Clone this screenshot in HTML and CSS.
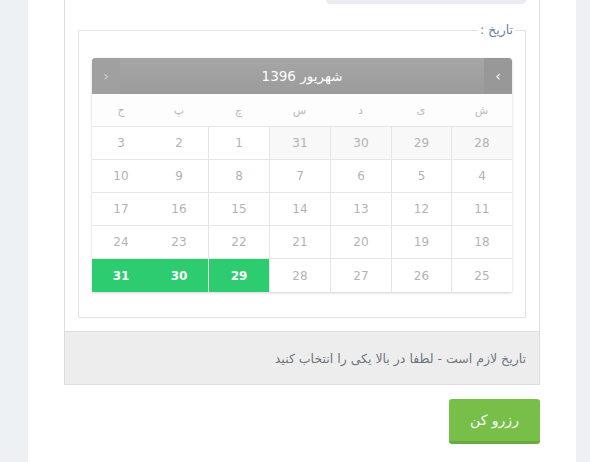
FILE: index.html
```html
<!DOCTYPE html>
<html lang="fa" dir="rtl">

<head>
    <meta charset="UTF-8">
    <meta name="viewport" content="width=device-width, initial-scale=1.0">
    <title>رزرو</title>
    <link rel="stylesheet" href="styles.css">
</head>

<body>
    <div class="page">
        <div class="panel">
            <div class="panel-body">
                <div class="input-stub"></div>
                <fieldset class="date-field">
                    <legend>تاریخ :</legend>
                    <div class="calendar">
                        <div class="cal-head">
                            <span class="cal-btn next">&rsaquo;</span>
                            <span class="cal-title">شهریور 1396</span>
                            <span class="cal-btn prev">&lsaquo;</span>
                        </div>
                        <div class="cal-grid">
                            <div class="wd">ش</div>
                            <div class="wd">ی</div>
                            <div class="wd">د</div>
                            <div class="wd">س</div>
                            <div class="wd">چ</div>
                            <div class="wd">پ</div>
                            <div class="wd">ج</div>

                            <div class="day other">28</div>
                            <div class="day other">29</div>
                            <div class="day other">30</div>
                            <div class="day other">31</div>
                            <div class="day">1</div>
                            <div class="day">2</div>
                            <div class="day">3</div>

                            <div class="day">4</div>
                            <div class="day">5</div>
                            <div class="day">6</div>
                            <div class="day">7</div>
                            <div class="day">8</div>
                            <div class="day">9</div>
                            <div class="day">10</div>

                            <div class="day">11</div>
                            <div class="day">12</div>
                            <div class="day">13</div>
                            <div class="day">14</div>
                            <div class="day">15</div>
                            <div class="day">16</div>
                            <div class="day">17</div>

                            <div class="day">18</div>
                            <div class="day">19</div>
                            <div class="day">20</div>
                            <div class="day">21</div>
                            <div class="day">22</div>
                            <div class="day">23</div>
                            <div class="day">24</div>

                            <div class="day last">25</div>
                            <div class="day last">26</div>
                            <div class="day last">27</div>
                            <div class="day last">28</div>
                            <div class="day last open">29</div>
                            <div class="day last open">30</div>
                            <div class="day last open">31</div>
                        </div>
                    </div>
                </fieldset>
            </div>
            <div class="panel-footer">تاریخ لازم است - لطفا در بالا یکی را انتخاب کنید</div>
        </div>
        <div class="actions">
            <button class="btn-book">رزرو کن</button>
        </div>
    </div>
</body>

</html>
```

FILE: styles.css
```css
* {
    margin: 0;
    padding: 0;
    box-sizing: border-box;
    font-family: 'DejaVu Sans', sans-serif;
}

body {
    background: #eef1f4;
    direction: rtl;
}

.page {
    width: 548px;
    min-height: 462px;
    margin-right: 14px;
    background: #ffffff;
    padding: 0 36px;
}

.panel {
    border: 1px solid #dddddd;
    border-top: none;
}

.panel-body {
    padding: 0 13px 13px 13px;
}

.input-stub {
    width: 200px;
    height: 4px;
    background: #e9ecf0;
    border-radius: 0 0 5px 5px;
}

.date-field {
    margin-top: 19px;
    border: 1px solid #e3e3e3;
    padding: 21px 13px 25px 13px;
}

.date-field legend {
    font-size: 12.5px;
    color: #6a80a0;
    padding: 0 2px;
    margin-right: -3px;
    line-height: 14px;
}

.calendar {
    border-radius: 4px 4px 0 0;
    box-shadow: 0 1px 3px rgba(0, 0, 0, 0.18);
    background: #ffffff;
}

.cal-head {
    height: 36px;
    display: flex;
    align-items: stretch;
    background: linear-gradient(#a6a6a6, #9b9b9b);
    border-radius: 4px 4px 0 0;
    color: #ffffff;
}

.cal-btn {
    width: 28px;
    display: flex;
    align-items: center;
    justify-content: center;
    font-size: 14px;
    background: #989898;
}

.cal-btn.next {
    border-radius: 0 4px 0 0;
}

.cal-btn.prev {
    color: #cfcfcf;
    border-radius: 4px 0 0 0;
    background: #a0a0a0;
}

.cal-title {
    flex: 1;
    display: flex;
    align-items: center;
    justify-content: center;
    font-size: 13.5px;
}

.cal-grid {
    display: grid;
    grid-template-columns: 61px 60px 61px 61px 61px 58px 58px;
}

.wd {
    height: 33px;
    display: flex;
    align-items: center;
    justify-content: center;
    font-size: 11px;
    color: #bbbbbb;
    background: #fdfdfd;
    border-bottom: 1px solid #e6e6e6;
}

.day {
    height: 33px;
    display: flex;
    align-items: center;
    justify-content: center;
    font-size: 12px;
    color: #b3b3b3;
    border-bottom: 1px solid #e6e6e6;
    border-left: 1px solid #e6e6e6;
}

.day:nth-child(7n),
.day:nth-child(7n+6) {
    border-left: none;
}

.day.other {
    background: #f8f8f8;
}

.day.last {
    border-bottom: none;
}

.day.open {
    background: #2ecc71;
    color: #ffffff;
    font-weight: bold;
}

.panel-footer {
    height: 53px;
    background: #ededed;
    border-top: 1px solid #dddddd;
    padding: 0 13px;
    display: flex;
    align-items: center;
    font-size: 12.5px;
    color: #6e7680;
}

.actions {
    display: flex;
    padding-top: 14px;
}

.btn-book {
    width: 91px;
    height: 45px;
    border: none;
    border-bottom: 3px solid #6aab3f;
    border-radius: 3px;
    background: #77bf48;
    color: #ffffff;
    font-size: 14px;
}
```
